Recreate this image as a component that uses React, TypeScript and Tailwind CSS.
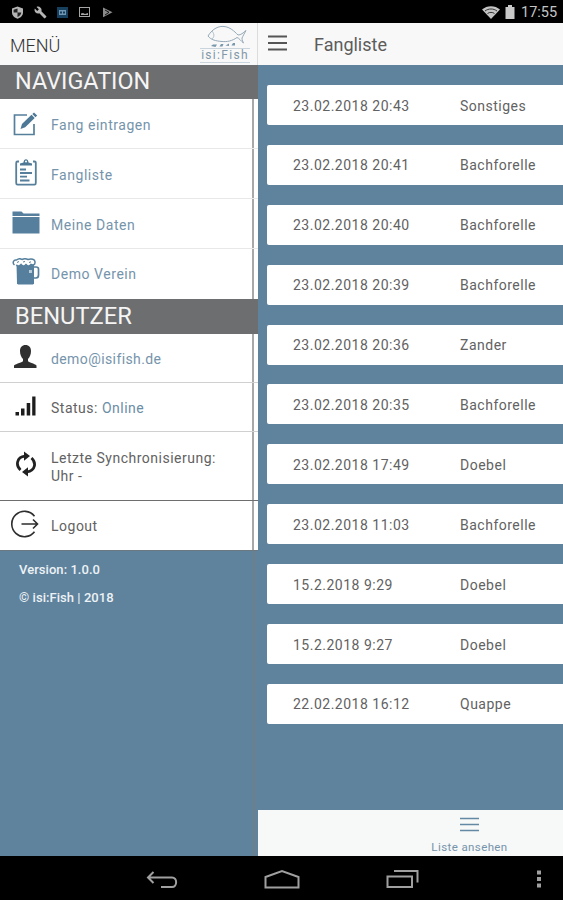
import type { ReactNode } from 'react';

interface Catch {
  date: string;
  fish: string;
}

const catches: Catch[] = [
  { date: '23.02.2018 20:43', fish: 'Sonstiges' },
  { date: '23.02.2018 20:41', fish: 'Bachforelle' },
  { date: '23.02.2018 20:40', fish: 'Bachforelle' },
  { date: '23.02.2018 20:39', fish: 'Bachforelle' },
  { date: '23.02.2018 20:36', fish: 'Zander' },
  { date: '23.02.2018 20:35', fish: 'Bachforelle' },
  { date: '23.02.2018 17:49', fish: 'Doebel' },
  { date: '23.02.2018 11:03', fish: 'Bachforelle' },
  { date: '15.2.2018 9:29', fish: 'Doebel' },
  { date: '15.2.2018 9:27', fish: 'Doebel' },
  { date: '22.02.2018 16:12', fish: 'Quappe' },
];

function StatusBar() {
  return (
    <div className="flex h-[23px] shrink-0 items-center justify-between bg-black pl-[11px] pr-[5px] pt-px">
      <div className="flex items-center gap-[10px]">
        {/* Schild */}
        <svg className="h-[13px] w-[13px]" viewBox="0 0 13 13">
          <path d="M6.5 0.5L12 2.5V6.5C12 9.5 9.5 12 6.5 12.7C3.5 12 1 9.5 1 6.5V2.5Z" fill="#b5b5b5" />
          <path d="M6.5 2.6V6.5H2.6V3.8ZM6.5 6.5H10.3C10 8.7 8.5 10.3 6.5 11Z" fill="#222" />
        </svg>
        {/* Schraubenschlüssel */}
        <svg className="h-[13px] w-[13px]" viewBox="0 0 24 24">
          <path
            d="M22.7 19l-9.1-9.1c.9-2.3.4-5-1.5-6.9-2-2-5-2.4-7.4-1.3L9 6 6 9 1.6 4.7C.4 7.1.9 10.1 2.9 12.1c1.9 1.9 4.6 2.4 6.9 1.5l9.1 9.1c.4.4 1 .4 1.400 0l2.3-2.3c.5-.4.5-1.1.1-1.4z"
            fill="#b5b5b5"
          />
        </svg>
        <svg className="h-[11px] w-[11px]" viewBox="0 0 11 11">
          <rect width="11" height="11" fill="#17405f" />
          <path d="M2 3H9V8H2Z" fill="#7196b3" />
          <path d="M3 4.5H5V6.5H3ZM6 4.5H8V6.5H6Z" fill="#17405f" />
        </svg>
        <svg className="ml-px h-[10px] w-[11px]" viewBox="0 0 11 10">
          <rect x="0.5" y="0.5" width="10" height="9" fill="none" stroke="#a5a5a5" />
          <path d="M2 8V6.5L4 6L6 7L9 6V8Z" fill="#a5a5a5" />
        </svg>
        <svg className="ml-[2px] h-[11px] w-[11px]" viewBox="0 0 11 11">
          <path d="M1 0.5L10.5 5.3L1 10.3Z" fill="#8a8a8a" />
          <path d="M3 3L7 5.3L3 8" fill="none" stroke="#151515" />
        </svg>
      </div>
      <div className="flex items-center">
        <svg className="h-[13px] w-[18px]" viewBox="0 0 18 13">
          <path d="M0 3.5C5-1 13-1 18 3.5L9 13Z" fill="#c4c4c4" />
          <path d="M3 5C6.5 2.3 11.5 2.3 15 5M5.5 7.5C7.5 6 10.5 6 12.5 7.5" fill="none" stroke="#333" />
        </svg>
        <svg className="ml-[5px] h-[14px] w-[10px]" viewBox="0 0 10 14">
          <path d="M3 0H7V2H9.5V14H0.5V2H3Z" fill="#c9c9c9" />
        </svg>
        <span className="ml-[6px] w-[37px] pt-[2px] text-[14.5px] leading-none text-[#c4c4c4]">17:55</span>
      </div>
    </div>
  );
}

function Logo() {
  return (
    <div className="flex w-[50px] flex-col items-center">
      <svg className="h-[23px] w-[50px]" viewBox="0 0 50 23" fill="none">
        <path
          d="M8 11C13 3 19 1 24 1.5C30 2 34 6 38 10C41 10 43 8 46 5.5C44 9 43 11 42 13C42 15 43 17 43.5 18C41 16 39 13 37 12.5C32 16 27 17 22 16.5C16 16 11 15 8 11Z"
          stroke="#94a9b8"
        />
        <path d="M12 6C15 10 14 12 12 14" stroke="#9db0be" strokeWidth="0.8" />
        <path d="M11 21L13 19.5H17L15.5 22ZM19.5 21.5L21 19H23.5L22.5 21.5ZM25.5 20.500L29 18.5V21ZM31.5 20.5L33 18H35V20.5Z" fill="#7898ad" />
      </svg>
      <div className="w-full border-y border-[#c9d4dc] text-center text-[12px] leading-[13px] tracking-[1.3px] text-[#8199aa]">
        isi:Fish
      </div>
    </div>
  );
}

function SectionTitle({ children, className }: { children: ReactNode; className: string }) {
  return (
    <div className={`flex shrink-0 items-center bg-[#6d6e70] pl-[15px] text-[#f5f5f5] ${className}`}>
      {children}
    </div>
  );
}

function MenuRow({ icon, children, className }: { icon: ReactNode; children: ReactNode; className: string }) {
  return (
    <div className={`flex shrink-0 items-center bg-white ${className}`}>
      <div className="flex w-[51px] shrink-0 pl-[11px]">{icon}</div>
      <div className="flex h-full flex-1 items-center whitespace-pre-line">{children}</div>
      <div className="h-full w-[6px] border-l-2 border-[#a7a8aa]" />
    </div>
  );
}

const EditIcon = () => (
  <svg className="ml-[2px] h-[24px] w-[25px]" viewBox="0 0 25 24" fill="none">
    <path d="M14 3H1.5V22.5H21V12" stroke="#557f9b" strokeWidth="1.7" />
    <path d="M9 12L18.500 2.8L21.7 6L12.2 15.2L7.5 17Z" fill="#4d7896" />
    <path d="M19.3 2L21 0.4L24.2 3.5L22.500 5.2Z" fill="#4d7896" />
  </svg>
);

const ClipboardIcon = () => (
  <svg className="ml-[4px] h-[28px] w-[22px]" viewBox="0 0 22 28" fill="none">
    <path d="M4 3.5H2.5C1.500 3.5 1.2 4 1.2 5V25C1.2 26 1.5 26.6 2.5 26.6H19.500C20.5 26.6 20.8 26 20.8 25V5C20.8 4 20.5 3.5 19.500 3.5H18" stroke="#557f9b" strokeWidth="1.800" />
    <path d="M5 7.5V5.5L8.5 4.5C8.5 0 13.5 0 13.5 4.5L17 5.5V7.5Z" fill="#4d7896" />
    <path d="M5 11.5H11M5 15H17M5 18.7H12M5 22.5H14.5" stroke="#557f9b" strokeWidth="1.8" />
    <circle cx="11" cy="3.5" r="1" fill="#fff" />
  </svg>
);

const FolderIcon = () => (
  <svg className="ml-px h-[23px] w-[28px]" viewBox="0 0 28 23">
    <path d="M0.5 0.5H9.5L11.5 2.5H27.5V5H0.5Z" fill="#557f9d" />
    <path d="M0.5 6H27.5V22.5H0.5Z" fill="#557f9d" />
  </svg>
);

const BeerIcon = () => (
  <svg className="ml-px h-[27px] w-[28px]" viewBox="0 0 28 27" fill="none">
    <path d="M22 9H24C26 9 26.5 9.5 26.5 11V17C26.5 19 26 20 24 20H22" stroke="#557f9d" strokeWidth="1.7" />
    <path d="M4.5 6H22V25.5L21 26.5H6L5 25.500Z" fill="#557f9d" />
    <path
      d="M2.5 7C0 5 1.5 1.5 4.5 2C6.5 0.5 8.5 0.5 10 1.5C12 0.500 14 0.5 16 1.500C19 0.5 23.500 1 23 4.5C23 7 21 7.5 19 6.5C17.5 9 15.5 8 14 6.5C12 9 10 8 9 6.5C6.5 9 5 8 4.5 6.8"
      fill="#fff"
      stroke="#557f9d"
      strokeWidth="1.5"
    />
    <path d="M5 4.500L7 3.5M11 4L13 3.5M17 4.500L19 3.8" stroke="#557f9d" />
    <path d="M17 12H20V15H17Z" fill="#b9cbd8" />
  </svg>
);

const UserIcon = () => (
  <svg className="ml-[3px] h-[23px] w-[23px]" viewBox="0 0 23 23">
    <path
      d="M11.5 0C15 0 17 2.5 17 6C17 9.5 15.8 12 14 14V16C14 17.5 21 18.5 22.5 20.5V23H0V20.5C2 18.5 9 17.5 9 16V14C7.2 12 6 9.5 6 6C6 2.5 8 0 11.5 0Z"
      fill="#303030"
    />
  </svg>
);

const SignalIcon = () => (
  <svg className="ml-[4px] h-[20px] w-[21px]" viewBox="0 0 21 20">
    <path d="M0.5 16H4V19.5H0.5ZM6 12.5H9.5V19.5H6ZM11.7 7H15.2V19.5H11.7ZM17.2 0.5H20.5V19.5H17.2Z" fill="#1d1d1d" />
  </svg>
);

const SyncIcon = () => (
  <svg className="ml-[5px] h-[26px] w-[20px]" viewBox="0 0 20 26" fill="none">
    <path d="M4.5 19C-0.5 14.5 0.5 6 9 5.2M15.5 7C20.5 11.5 19.5 20 11 20.8" stroke="#222" strokeWidth="2.8" />
    <path d="M8 0.5L14 5L8 9.800ZM12 16.2L6 21L12 25.5Z" fill="#222" />
  </svg>
);

const LogoutIcon = () => (
  <svg className="h-[28px] w-[28px]" viewBox="0 0 28 28" fill="none" stroke="#2e2e2e" strokeWidth="1.6">
    <path d="M23.5 6.2A12.7 12.7 0 1 0 23.5 21.8" />
    <path d="M10.500 14H26.500M22 9.5L26.500 14L22 18.5" />
  </svg>
);

function Menu() {
  return (
    <div className="flex w-[258px] shrink-0 flex-col bg-[#5f829d]">
      <div className="flex h-[42px] shrink-0 items-center justify-between border-r border-[#dcdcdc] bg-[#f8f8f8] pl-[10px] pr-[7px]">
        <span className="pt-[2px] text-[18px] font-light text-[#333]">MENÜ</span>
        <Logo />
      </div>
      <SectionTitle className="h-[34px] text-[23.4px]">NAVIGATION</SectionTitle>
      <div className="flex shrink-0 flex-col text-[14px] tracking-[0.55px] text-[#7594ab]">
        <MenuRow className="h-[50px] border-b border-[#e8e8e8]" icon={<EditIcon />}>
          <span className="pt-[4px]">Fang eintragen</span>
        </MenuRow>
        <MenuRow className="h-[50px] border-b border-[#e8e8e8]" icon={<div className="pb-[4px]"><ClipboardIcon /></div>}>
          <span className="pt-[3px]">Fangliste</span>
        </MenuRow>
        <MenuRow className="h-[50px] border-b border-[#e8e8e8]" icon={<div className="pb-[2px]"><FolderIcon /></div>}>
          <span className="pt-[3px]">Meine Daten</span>
        </MenuRow>
        <MenuRow className="h-[50px]" icon={<div className="pb-[5px]"><BeerIcon /></div>}>
          <span className="pt-px">Demo Verein</span>
        </MenuRow>
      </div>
      <SectionTitle className="h-[35px] text-[23.7px]">BENUTZER</SectionTitle>
      <div className="flex shrink-0 flex-col text-[14px] tracking-[0.5px] text-[#626262]">
        <MenuRow className="h-[49px] border-b border-[#d0d0d0]" icon={<div className="pb-[4px]"><UserIcon /></div>}>
          <span className="pt-[3px] tracking-[0.4px] text-[#7594ab]">demo@isifish.de</span>
        </MenuRow>
        <MenuRow className="h-[49px] border-b border-[#d0d0d0]" icon={<div className="pb-[3px]"><SignalIcon /></div>}>
          <span className="pt-[2px]">
            Status: <span className="text-[#6b8da6]">Online</span>
          </span>
        </MenuRow>
        <MenuRow className="h-[69px] border-b border-[#6d6e70]" icon={<div className="pb-[5px]"><SyncIcon /></div>}>
          <span className="pt-[2px] leading-[18px]">{'Letzte Synchronisierung:\nUhr -'}</span>
        </MenuRow>
        <MenuRow className="h-[49px]" icon={<div className="pb-[4px]"><LogoutIcon /></div>}>
          <span className="pt-px">Logout</span>
        </MenuRow>
      </div>
      <div className="flex flex-1 justify-between border-t border-[#6b7880] pl-[19px] text-[13px] font-medium tracking-[0.05px] text-[#edf2f5]">
        <div className="pt-[5px] leading-[28px]">
          <div>Version: 1.0.0</div>
          <div>© isi:Fish | 2018</div>
        </div>
        <div className="w-[5px] border-l-2 border-[#6f7f8a]" />
      </div>
    </div>
  );
}

function CatchList() {
  return (
    <div className="flex min-w-0 flex-1 flex-col bg-[#5f829d]">
      <div className="flex h-[42px] shrink-0 items-center bg-[#f8f8f8] pl-[10px]">
        <svg className="mb-[3px] h-[16px] w-[19px]" viewBox="0 0 19 16">
          <path d="M0 1.5H19M0 8H19M0 14.5H19" stroke="#555" strokeWidth="1.8" />
        </svg>
        <span className="ml-[27px] pt-px text-[18px] text-[#5c5c5c]">Fangliste</span>
      </div>
      <div className="flex flex-1 flex-col gap-[19.9px] pl-[9px] pt-[20px]">
        {catches.map((item) => (
          <div
            key={item.date}
            className="flex h-[40px] shrink-0 items-center rounded-l-[2px] bg-white pl-[26px] pt-[2px] text-[14px] tracking-[0.5px] text-[#626262]"
          >
            <span className="w-[167px]">{item.date}</span>
            <span>{item.fish}</span>
          </div>
        ))}
      </div>
      <div className="flex h-[46px] shrink-0 flex-col items-center bg-[#f7f8f8] pl-[118px] pt-[7px]">
        <svg className="h-[15px] w-[19px]" viewBox="0 0 19 15">
          <path d="M0 1.5H19M0 7.5H19M0 13.5H19" stroke="#6389a4" strokeWidth="1.5" />
        </svg>
        <span className="mt-[7px] text-[11.5px] leading-[16px] tracking-[0.4px] text-[#7594ab]">Liste ansehen</span>
      </div>
    </div>
  );
}

function NavBar() {
  return (
    <div className="flex h-[44px] shrink-0 items-center bg-black pl-[146px] text-[#a0a0a0]">
      <svg className="mt-[3px] h-[18px] w-[32px]" viewBox="0 0 32 18" fill="none" stroke="currentColor" strokeWidth="2">
        <path d="M7.5 1L2 6.5L7.5 12M2 6.5H26C31.5 6.5 31.5 16 26 16H15" />
      </svg>
      <svg className="ml-[86px] mt-[2px] h-[20px] w-[36px]" viewBox="0 0 36 20" fill="none" stroke="currentColor" strokeWidth="2">
        <path d="M1.5 18.5V8L18 2L34.5 8V18.5Z" />
      </svg>
      <svg className="ml-[86px] mt-[2px] h-[20px] w-[34px]" viewBox="0 0 34 20" fill="none" stroke="currentColor" strokeWidth="2">
        <path d="M1.5 7.5H26V18H1.5Z" />
        <path d="M8 2H31.5V13.5" />
      </svg>
      <svg className="ml-[116px] mt-[2px] h-[18px] w-[6px]" viewBox="0 0 6 18" fill="currentColor">
        <path d="M1 0.5H5V4.5H1ZM1 7H5V11H1ZM1 13.5H5V17.5H1Z" />
      </svg>
    </div>
  );
}

export default function App() {
  return (
    <div className="flex h-[900px] w-[563px] flex-col overflow-hidden font-['Roboto',sans-serif]">
      <StatusBar />
      <div className="flex min-h-0 flex-1">
        <Menu />
        <CatchList />
      </div>
      <NavBar />
    </div>
  );
}
